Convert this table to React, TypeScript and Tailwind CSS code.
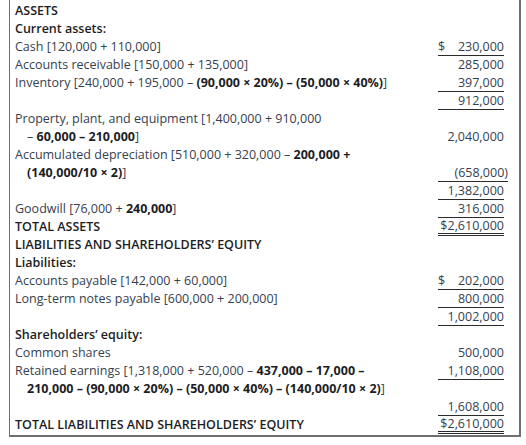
import type { ReactNode } from 'react';

type Line = 'none' | 'single' | 'double';

// Bold fragment inside a regular label.
function B({ children }: { children: ReactNode }) {
  return <span className="font-bold text-[#1d1d1f]">{children}</span>;
}

function Amount({
  value,
  dollar = false,
  line = 'none',
  paren = false,
}: {
  value?: string;
  dollar?: boolean;
  line?: Line;
  paren?: boolean;
}) {
  if (!value) return <div className="w-[66px] shrink-0" />;
  const rule =
    line === 'single'
      ? 'border-b border-[#2b2b2b]'
      : line === 'double'
        ? 'border-b-[3px] border-double border-[#2b2b2b]'
        : '';
  return (
    <div
      className={`flex h-[18px] shrink-0 items-center justify-between ${paren ? '-mr-[4px] w-[70px]' : 'w-[66px]'} ${rule}`}
    >
      <span>{dollar ? '$' : ''}</span>
      <span>{value}</span>
    </div>
  );
}

function Row({
  children,
  indent = false,
  bold = false,
  amount,
  dollar,
  line,
  paren,
}: {
  children?: ReactNode;
  indent?: boolean;
  bold?: boolean;
  amount?: string;
  dollar?: boolean;
  line?: Line;
  paren?: boolean;
}) {
  return (
    <div className="flex h-[18px] items-center justify-between pr-[15px]">
      <div
        className={`${indent ? 'pl-[17px]' : 'pl-[5px]'} whitespace-nowrap ${bold ? 'font-semibold text-[#1d1d1f]' : ''}`}
      >
        {children}
      </div>
      <Amount value={amount} dollar={dollar} line={line} paren={paren} />
    </div>
  );
}

export default function App() {
  return (
    <div className="h-[445px] w-[526px] bg-white">
      <div
        className="ml-[9px] w-[512px] border-b-2 border-l border-r-2 border-[#6e6e6e] pt-[2px] pb-[1px] text-[12.5px] leading-[18px] text-[#36414f]"
        style={{ fontFamily: '"Open Sans", "Noto Sans", sans-serif' }}
      >
        <Row bold>ASSETS</Row>
        <Row bold>Current assets:</Row>
        <Row amount="230,000" dollar line="single">
          Cash [120,000 + 110,000]
        </Row>
        <Row amount="285,000">Accounts receivable [150,000 + 135,000]</Row>
        <Row amount="397,000" line="single">
          Inventory [240,000 + 195,000 – <B>(90,000 × 20%) – (50,000 × 40%)</B>]
        </Row>
        <Row amount="912,000" line="single" />
        <Row>Property, plant, and equipment [1,400,000 + 910,000</Row>
        <Row indent amount="2,040,000">
          – <B>60,000 – 210,000</B>]
        </Row>
        <Row>
          Accumulated depreciation [510,000 + 320,000 – <B>200,000 +</B>
        </Row>
        <Row indent amount="(658,000)" line="single" paren>
          <B>(140,000/10 × 2)</B>]
        </Row>
        <Row amount="1,382,000" line="single" />
        <Row amount="316,000" line="single">
          Goodwill [76,000 + <B>240,000</B>]
        </Row>
        <Row bold amount="$2,610,000" line="double">
          TOTAL ASSETS
        </Row>
        <Row bold>LIABILITIES AND SHAREHOLDERS’ EQUITY</Row>
        <Row bold>Liabilities:</Row>
        <Row amount="202,000" dollar line="single">
          Accounts payable [142,000 + 60,000]
        </Row>
        <Row amount="800,000" line="single">
          Long-term notes payable [600,000 + 200,000]
        </Row>
        <Row amount="1,002,000" line="single" />
        <Row bold>Shareholders’ equity:</Row>
        <Row amount="500,000">Common shares</Row>
        <Row amount="1,108,000" line="single">
          Retained earnings [1,318,000 + 520,000 – <B>437,000 – 17,000 –</B>
        </Row>
        <Row indent>
          <B>210,000 – (90,000 × 20%) – (50,000 × 40%) – (140,000/10 × 2)</B>]
        </Row>
        <Row amount="1,608,000" line="single" />
        <Row bold amount="$2,610,000" line="double">
          TOTAL LIABILITIES AND SHAREHOLDERS’ EQUITY
        </Row>
      </div>
    </div>
  );
}
